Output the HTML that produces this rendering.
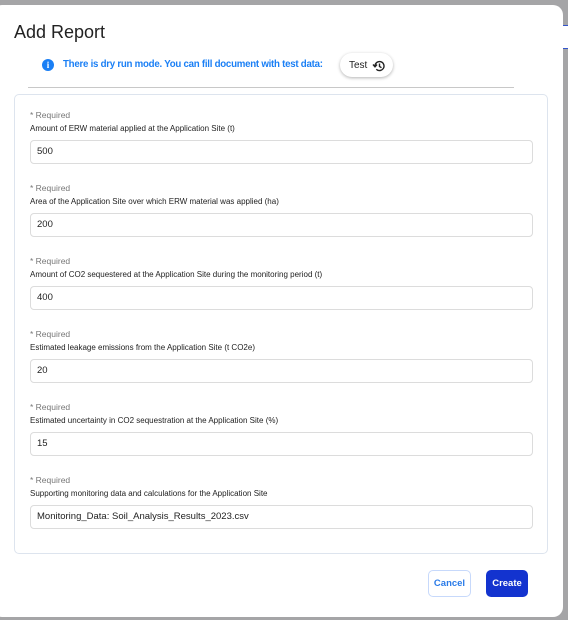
<!DOCTYPE html>
<html><head><style>
body{margin:0;width:568px;height:620px;background:#a5a5a7;font-family:"Liberation Sans",Arial,sans-serif;position:relative;overflow:hidden}
.edge{position:absolute;left:563px;top:25px;width:5px;height:22px;background:#fff;border-top:1px solid #3355cc;border-bottom:1px solid #3355cc}
.modal{position:absolute;left:-8px;top:5px;width:571px;height:612px;background:#fff;border-radius:10px}
h1{position:absolute;left:22px;top:17px;margin:0;font-size:18px;font-weight:normal;color:#222}
.info{position:absolute;left:50px;top:54px;width:12px;height:12px;border-radius:50%;background:#1a7ff5;color:#fff;font-size:9px;font-weight:bold;text-align:center;line-height:12px;font-family:"Liberation Serif",serif}
.msg{position:absolute;left:71px;top:54px;font-size:9.7px;font-weight:bold;color:#1a7ff5;letter-spacing:-0.25px}
.test{position:absolute;left:348px;top:48px;width:53px;height:24px;border-radius:12px;background:#fff;box-shadow:0 1px 3px rgba(0,0,0,.3);font-size:10px;color:#222}
.test span{position:absolute;left:9px;top:7px}
.test svg{position:absolute;left:32px;top:6px}
.hr{position:absolute;left:36px;top:82px;width:486px;height:1px;background:#c8c8c8}
.card{position:absolute;left:22px;top:89px;width:532px;height:458px;border:1px solid #dde4ee;border-radius:5px}
.f{position:absolute;left:15px}
.rq{font-size:8.5px;color:#777;position:absolute;top:0;white-space:nowrap}
.lb{font-size:8px;color:#222;position:absolute;top:14px;white-space:nowrap}
.in{position:absolute;top:30px;border:1px solid #dcdcdc;border-radius:4px;font-size:9.5px;color:#222;padding-left:6px;line-height:22px;box-sizing:border-box;width:503px;height:24px}
.btn{position:absolute;top:565px;height:27px;border-radius:5px;font-size:9.5px;font-weight:bold;text-align:center;line-height:27px}
</style></head><body>
<div class="edge"></div>
<div class="modal">
<h1>Add Report</h1>
<div class="info">i</div>
<div class="msg">There is dry run mode. You can fill document with test data:</div>
<div class="test"><span>Test</span><svg width="14" height="14" viewBox="0 0 14 14" fill="none" stroke="#222" stroke-width="1.4"><path d="M3 7a4.5 4.5 0 1 1 1.3 3.2"/><path d="M1 5.5 3 7.8 5 5.5"/><path d="M7.5 4.5v3l2 1.2"/></svg></div>
<div class="hr"></div>
<div class="card">
<div class="f" style="top:15px"><div class="rq">* Required</div><div class="lb">Amount of ERW material applied at the Application Site (t)</div><div class="in">500</div></div>
<div class="f" style="top:88px"><div class="rq">* Required</div><div class="lb">Area of the Application Site over which ERW material was applied (ha)</div><div class="in">200</div></div>
<div class="f" style="top:161px"><div class="rq">* Required</div><div class="lb">Amount of CO2 sequestered at the Application Site during the monitoring period (t)</div><div class="in">400</div></div>
<div class="f" style="top:234px"><div class="rq">* Required</div><div class="lb">Estimated leakage emissions from the Application Site (t CO2e)</div><div class="in">20</div></div>
<div class="f" style="top:307px"><div class="rq">* Required</div><div class="lb">Estimated uncertainty in CO2 sequestration at the Application Site (%)</div><div class="in">15</div></div>
<div class="f" style="top:380px"><div class="rq">* Required</div><div class="lb">Supporting monitoring data and calculations for the Application Site</div><div class="in">Monitoring_Data: Soil_Analysis_Results_2023.csv</div></div>
</div>
<div class="btn" style="left:436px;width:41px;border:1px solid #c7d9fb;color:#2a7be8;height:25px;line-height:25px">Cancel</div>
<div class="btn" style="left:494px;width:42px;background:#1333cf;color:#fff">Create</div>
</div>
</body></html>
